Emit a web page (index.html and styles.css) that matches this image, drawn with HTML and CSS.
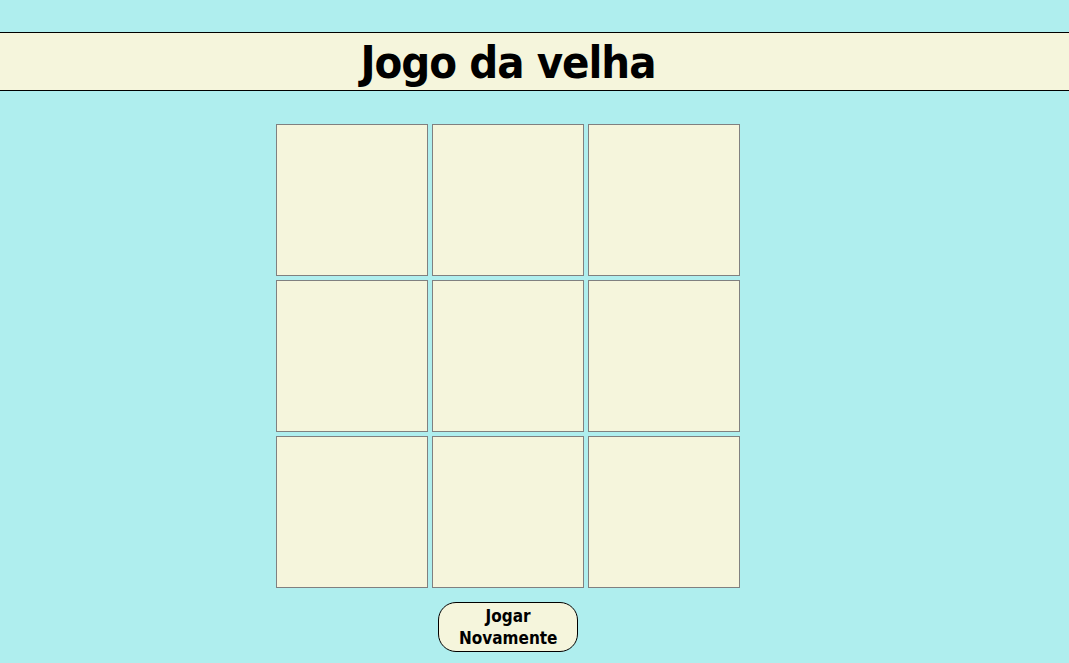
FILE: index.html
```html
<!DOCTYPE html>
<html lang="pt">
<head>
<meta charset="utf-8">
<title>Jogo da velha</title>
<link rel="stylesheet" href="styles.css">
</head>
<body>
<header class="topbar">
  <h1 class="title">Jogo da velha</h1>
</header>
<main class="game">
  <div class="board">
    <div class="cell"></div>
    <div class="cell"></div>
    <div class="cell"></div>
    <div class="cell"></div>
    <div class="cell"></div>
    <div class="cell"></div>
    <div class="cell"></div>
    <div class="cell"></div>
    <div class="cell"></div>
  </div>
  <button class="restart" type="button">Jogar Novamente</button>
</main>
</body>
</html>
```
FILE: styles.css
```css
html, body {
  margin: 0;
  padding: 0;
}
body {
  background: #afeeee;
  padding-top: 32px;
  font-family: "Liberation Sans Narrow", "DejaVu Sans Condensed", "Liberation Sans", sans-serif;
  color: #000;
}
.topbar {
  background: #f5f5dc;
  border-top: 1px solid #000;
  border-bottom: 1px solid #000;
  height: 57px;
}
.title {
  width: 1000px;
  margin: 0 0 0 8px;
  text-align: center;
  font-size: 45px;
  font-weight: bold;
  letter-spacing: -1px;
  line-height: 59px;
}
.game {
  width: 1000px;
  margin-left: 8px;
  padding-top: 33px;
  display: flex;
  flex-direction: column;
  align-items: center;
}
.board {
  display: grid;
  grid-template-columns: repeat(3, 152px);
  grid-template-rows: repeat(3, 152px);
  gap: 4px;
}
.cell {
  box-sizing: border-box;
  background: #f5f5dc;
  border: 1px solid #808080;
}
.restart {
  margin-top: 14px;
  width: 140px;
  height: 50px;
  box-sizing: border-box;
  background: #f5f5dc;
  border: 1px solid #000;
  border-radius: 18px;
  font-family: inherit;
  font-weight: bold;
  font-size: 17px;
  line-height: 22px;
  color: #000;
  padding: 0 20px;
}
```
